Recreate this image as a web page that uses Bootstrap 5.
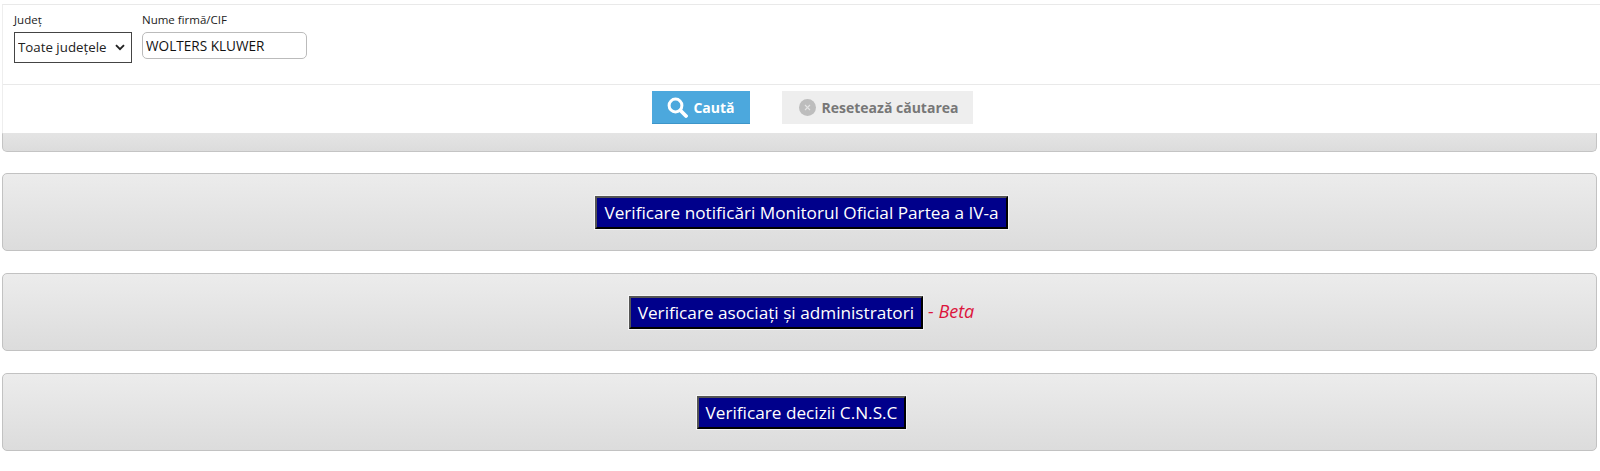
<!DOCTYPE html>
<html lang="ro">
<head>
<meta charset="utf-8">
<title>Verificare</title>
<link href="https://cdn.jsdelivr.net/npm/bootstrap@5.3.0/dist/css/bootstrap.min.css" rel="stylesheet">
<style>
html,body{background:#fff;height:471px;overflow:hidden}
body{font-family:"Open Sans","Noto Sans",sans-serif;color:#212529;padding:4px 3px 0 2px}
.top-panel{border-top:1px solid #e9e9e9;border-left:1px solid #eee;height:129px;background:#fff;margin-right:-3px}
.filter-row{height:80px;border-bottom:1px solid #e9e9e9;padding:9px 0 0 11px;gap:10px}
.fld-label{font-size:11.5px;line-height:12px;height:16px;margin-bottom:2px;color:#222;white-space:nowrap}
.sel-judet{appearance:none;width:118px;height:31px;font-size:13.3px;border:1px solid #444;border-radius:0;padding:2px 0 2px 3px;color:#222;font-family:inherit;background:#fff url("data:image/svg+xml,%3Csvg xmlns='http://www.w3.org/2000/svg' width='10' height='7'%3E%3Cpath d='M1 1.2l4 4 4-4' fill='none' stroke='%23222' stroke-width='1.9'/%3E%3C/svg%3E") no-repeat right 6px center}
.inp-firma{width:165px;height:27px;font-size:13.6px;border:1px solid #bbb;border-radius:5px;padding:0 3px;color:#111;font-family:inherit}
.act-row{height:48px;gap:32px;padding:0 0 3px 22px}
.btn-cauta,.btn-reset{height:33px;border:0;border-radius:0;font-size:14px;font-weight:700;display:flex;align-items:center;justify-content:center;padding:0}
.btn-cauta{width:98px;background:#4ca8dd;color:#fff;gap:5px;border-bottom:1px solid #3d95c9}
.btn-reset{width:191px;padding-left:2px;background:#eee;color:#777;gap:6px}
.panel-stub{height:19px;margin-bottom:21px;background:linear-gradient(#e4e4e4,#dcdcdc);border:1px solid #c4c4c4;border-top:1px solid #e4e4e4;border-radius:0 0 5px 5px}
.verif-box{height:78px;margin-bottom:22px;background:linear-gradient(#ececec,#dcdcdc);border:1px solid #c2c2c2;border-radius:5px;padding:1px 0 0 4px}
.btn-verif{background:#00008b;color:#fff;font-size:17.2px;line-height:25px;height:33px;border:2px solid;border-color:#555 #000 #000 #555;outline:1px solid #f4f4f4;padding:0 7px;border-radius:0;white-space:nowrap;font-family:inherit}
.beta-note{color:#dc143c;font-style:italic;font-size:18px;margin-left:5px;padding-bottom:2px}
</style>
</head>
<body>
<div class="top-panel">
  <div class="filter-row d-flex align-items-start">
    <div>
      <div class="fld-label">Județ</div>
      <select class="sel-judet"><option>Toate județele</option></select>
    </div>
    <div>
      <div class="fld-label">Nume firmă/CIF</div>
      <input class="inp-firma" type="text" value="WOLTERS KLUWER">
    </div>
  </div>
  <div class="act-row d-flex justify-content-center align-items-center">
    <button class="btn-cauta" type="button">
      <svg width="21" height="21" viewBox="0 0 21 21"><circle cx="8.5" cy="8.5" r="6.4" fill="none" stroke="#fff" stroke-width="3"/><path d="M13.5 13.5 19 19" stroke="#fff" stroke-width="3.8" stroke-linecap="round"/></svg>
      <span>Caută</span>
    </button>
    <button class="btn-reset" type="button">
      <svg width="17" height="17" viewBox="0 0 17 17"><circle cx="8.5" cy="8.5" r="8.5" fill="#bdbdbd"/><path d="M6 6l5 5M11 6l-5 5" stroke="#e4e4e4" stroke-width="1.1"/></svg>
      <span>Resetează căutarea</span>
    </button>
  </div>
</div>
<div class="panel-stub"></div>
<div class="verif-box d-flex justify-content-center align-items-center">
  <button class="btn-verif" type="button">Verificare notificări Monitorul Oficial Partea a IV-a</button>
</div>
<div class="verif-box d-flex justify-content-center align-items-center">
  <button class="btn-verif" type="button">Verificare asociați și administratori</button>
  <span class="beta-note">- Beta</span>
</div>
<div class="verif-box d-flex justify-content-center align-items-center">
  <button class="btn-verif" type="button">Verificare decizii C.N.S.C</button>
</div>
<script src="https://cdn.jsdelivr.net/npm/bootstrap@5.3.0/dist/js/bootstrap.bundle.min.js"></script>
</body>
</html>
